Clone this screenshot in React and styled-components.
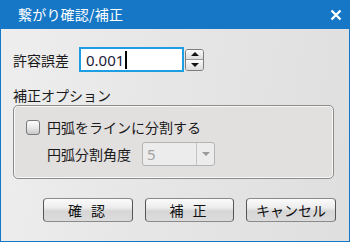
import React from 'react';
import styled, { createGlobalStyle } from 'styled-components';

const GlobalStyle = createGlobalStyle`
  html, body {
    margin: 0;
    padding: 0;
    background: #ffffff;
  }
  body {
    font-family: "Noto Sans CJK JP", "Noto Sans", sans-serif;
    font-size: 14px;
    color: #1a1a1a;
  }
`;

const Window = styled.div`
  width: 350px;
  height: 242px;
  box-sizing: border-box;
  border: 1px solid #1777c7;
  border-top: none;
  display: flex;
  flex-direction: column;
  background: linear-gradient(100deg, #eeeeee 0%, #e4e4e4 60%, #dfdfdf 100%);
`;

const TitleBar = styled.div`
  height: 29px;
  margin: 0 -1px;
  background: #1777c7;
  display: flex;
  align-items: center;
  justify-content: space-between;
  padding: 0 8px 0 18px;
  color: #ffffff;
  font-size: 14px;
  line-height: 29px;
  flex-shrink: 0;
`;

const Title = styled.div`
  letter-spacing: 0.2px;
`;

const CloseBtn = styled.div`
  width: 12px;
  height: 12px;
  display: flex;
`;

const Body = styled.div`
  display: flex;
  flex-direction: column;
  padding: 18px 12px 0 12px;
`;

const Row = styled.div`
  display: flex;
  align-items: center;
  height: 25px;
`;

const Label = styled.div`
  font-size: 14px;
  line-height: 18px;
  width: ${(p) => p.width || 'auto'};
  color: #1a1a1a;
`;

const TextBox = styled.div`
  width: 105px;
  height: 25px;
  box-sizing: border-box;
  border: 2px solid #1c9fe2;
  background: #ffffff;
  display: flex;
  align-items: center;
  padding-left: 5px;
  font-family: "Noto Sans", sans-serif;
  font-size: 15px;
  color: #1b1b3a;
`;

const Caret = styled.span`
  display: inline-block;
  width: 2px;
  height: 18px;
  background: #000000;
  margin-left: 1px;
`;

const Spinner = styled.div`
  width: 19px;
  height: 22px;
  margin-left: 1px;
  display: flex;
  flex-direction: column;
  border: 1px solid #7d7d7d;
  border-radius: 3px;
  box-sizing: border-box;
  overflow: hidden;
`;

const SpinHalf = styled.div`
  flex: 1;
  display: flex;
  align-items: center;
  justify-content: center;
  background: linear-gradient(#fbfbfb, #dcdcdc);
  & + & {
    border-top: 1px solid #9a9a9a;
  }
`;

const Arrow = styled.div`
  width: 0;
  height: 0;
  border-left: 4px solid transparent;
  border-right: 4px solid transparent;
  ${(p) => (p.up ? 'border-bottom: 4px solid #111;' : `border-top: 4px solid ${p.color || '#111'};`)}
`;

const SectionLabel = styled(Label)`
  margin-top: 14px;
`;

const Group = styled.div`
  width: 321px;
  height: 74px;
  box-sizing: border-box;
  margin-top: 1px;
  border: 1px solid #8c8c8c;
  border-radius: 5px;
  box-shadow: inset 0 0 0 1px #f7f7f7;
  background: #e2dfdf;
  padding: 13px 12px 0 12px;
  display: flex;
  flex-direction: column;
`;

const CheckRow = styled.div`
  display: flex;
  align-items: center;
  gap: 7px;
  height: 16px;
`;

const CheckBox = styled.div`
  width: 14px;
  height: 15px;
  box-sizing: border-box;
  border: 1px solid #7a7a7a;
  border-radius: 3px;
  background: linear-gradient(#fdfdfd, #e9e9e9 50%, #c9c9c9 100%);
`;

const AngleRow = styled.div`
  display: flex;
  align-items: center;
  margin-top: 7px;
  padding-left: 21px;
  height: 24px;
`;

const Combo = styled.div`
  width: 73px;
  height: 24px;
  box-sizing: border-box;
  margin-left: 11px;
  border: 1px solid #b4b4b4;
  border-radius: 3px;
  background: #ececec;
  display: flex;
  font-family: "Noto Sans", sans-serif;
  font-size: 15px;
  color: #a3a3a3;
`;

const ComboValue = styled.div`
  flex: 1;
  padding-left: 4px;
  line-height: 22px;
`;

const ComboBtn = styled.div`
  width: 17px;
  border-left: 1px solid #c4c4c4;
  display: flex;
  align-items: center;
  justify-content: center;
`;

const ButtonRow = styled.div`
  display: flex;
  justify-content: flex-end;
  gap: 12px;
  margin-top: 19px;
  margin-right: 1px;
`;

const Button = styled.div`
  width: ${(p) => p.width || 90}px;
  height: 24px;
  box-sizing: border-box;
  border: 1px solid #8a8a8a;
  border-left-color: #555;
  border-right-color: #555;
  border-radius: 4px;
  background: linear-gradient(#fbfbfb 0%, #ececec 40%, #d6d6d6 55%, #dcdcdc 100%);
  display: flex;
  align-items: center;
  justify-content: center;
  font-size: 14px;
  color: #111;
  white-space: pre;
  letter-spacing: ${(p) => (p.spaced ? '3px' : '0')};
`;

export default function App() {
  return (
    <>
      <GlobalStyle />
      <Window>
        <TitleBar>
          <Title>繋がり確認/補正</Title>
          <CloseBtn>
            <svg width="12" height="12" viewBox="0 0 12 12">
              <path d="M1.5 1.5 L10.5 10.5 M10.5 1.5 L1.5 10.5" stroke="#fff" strokeWidth="2.4" />
            </svg>
          </CloseBtn>
        </TitleBar>
        <Body>
          <Row>
            <Label width="66px">許容誤差</Label>
            <TextBox>
              0.001
              <Caret />
            </TextBox>
            <Spinner>
              <SpinHalf><Arrow up /></SpinHalf>
              <SpinHalf><Arrow /></SpinHalf>
            </Spinner>
          </Row>
          <SectionLabel>補正オプション</SectionLabel>
          <Group>
            <CheckRow>
              <CheckBox />
              <Label>円弧をラインに分割する</Label>
            </CheckRow>
            <AngleRow>
              <Label>円弧分割角度</Label>
              <Combo>
                <ComboValue>5</ComboValue>
                <ComboBtn><Arrow color="#9a9a9a" /></ComboBtn>
              </Combo>
            </AngleRow>
          </Group>
          <ButtonRow>
            <Button spaced>確 認</Button>
            <Button width={89} spaced>補 正</Button>
            <Button>キャンセル</Button>
          </ButtonRow>
        </Body>
      </Window>
    </>
  );
}
